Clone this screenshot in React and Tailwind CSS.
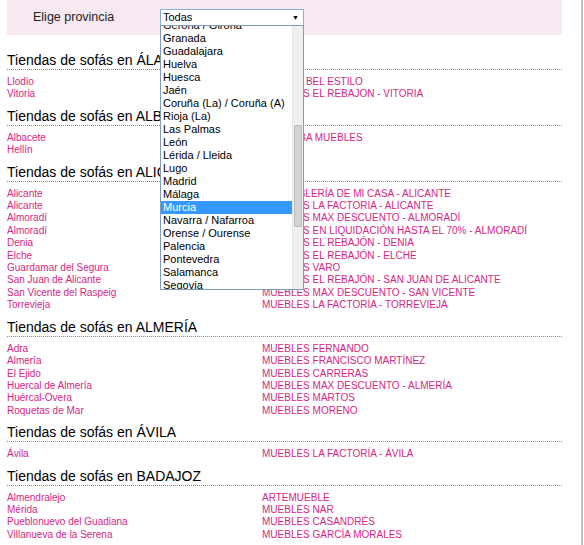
const provinces = [
  "Gerona / Girona",
  "Granada",
  "Guadalajara",
  "Huelva",
  "Huesca",
  "Jaén",
  "Coruña (La) / Coruña (A)",
  "Rioja (La)",
  "Las Palmas",
  "León",
  "Lérida / Lleida",
  "Lugo",
  "Madrid",
  "Málaga",
  "Murcia",
  "Navarra / Nafarroa",
  "Orense / Ourense",
  "Palencia",
  "Pontevedra",
  "Salamanca",
  "Segovia",
  "Sevilla",
];

const sections = [
  {
    name: "ÁLAVA",
    rows: [
      ["Llodio", "MUEBLE BEL ESTILO"],
      ["Vitoria", "MUEBLES EL REBAJON - VITORIA"],
    ],
  },
  {
    name: "ALBACETE",
    rows: [
      ["Albacete", "CÓRDOBA MUEBLES"],
      ["Hellín", "DECOR"],
    ],
  },
  {
    name: "ALICANTE",
    rows: [
      ["Alicante", "LA MUEBLERÍA DE MI CASA - ALICANTE"],
      ["Alicante", "MUEBLES LA FACTORIA - ALICANTE"],
      ["Almoradí", "MUEBLES MAX DESCUENTO - ALMORADÍ"],
      ["Almoradí", "MUEBLES EN LIQUIDACIÓN HASTA EL 70% - ALMORADÍ"],
      ["Denia", "MUEBLES EL REBAJÓN - DENIA"],
      ["Elche", "MUEBLES EL REBAJÓN - ELCHE"],
      ["Guardamar del Segura", "MUEBLES VARO"],
      ["San Juan de Alicante", "MUEBLES EL REBAJÓN - SAN JUAN DE ALICANTE"],
      ["San Vicente del Raspeig", "MUEBLES MAX DESCUENTO - SAN VICENTE"],
      ["Torrevieja", "MUEBLES LA FACTORÍA - TORREVIEJA"],
    ],
  },
  {
    name: "ALMERÍA",
    rows: [
      ["Adra", "MUEBLES FERNANDO"],
      ["Almería", "MUEBLES FRANCISCO MARTÍNEZ"],
      ["El Ejido", "MUEBLES CARRERAS"],
      ["Huercal de Almería", "MUEBLES MAX DESCUENTO - ALMERÍA"],
      ["Huércal-Overa", "MUEBLES MARTOS"],
      ["Roquetas de Mar", "MUEBLES MORENO"],
    ],
  },
  {
    name: "ÁVILA",
    rows: [["Ávila", "MUEBLES LA FACTORÍA - ÁVILA"]],
  },
  {
    name: "BADAJOZ",
    rows: [
      ["Almendralejo", "ARTEMUEBLE"],
      ["Mérida", "MUEBLES NAR"],
      ["Pueblonuevo del Guadiana", "MUEBLES CASANDRÉS"],
      ["Villanueva de la Serena", "MUEBLES GARCÍA MORALES"],
    ],
  },
];

function Section({ name, rows }) {
  return (
    <div className="mb-[6px]">
      <h2 className="text-[14px] leading-[18px] text-black border-b border-dotted border-[#8a8a8a]">
        Tiendas de sofás en {name}
      </h2>
      <div className="pt-[6px] grid grid-cols-[255px_1fr] text-[10px] leading-[12.4px] text-[#d42784]">
        {rows.map(([city, store], i) => (
          <div key={i} className="contents">
            <a href="#" className="whitespace-nowrap">{city}</a>
            <a href="#" className="whitespace-nowrap">{store}</a>
          </div>
        ))}
      </div>
    </div>
  );
}

export default function App() {
  return (
    <div
      className="w-[583px] h-[545px] overflow-hidden bg-white border-r-2 border-[#c4c4c4]"
      style={{ fontFamily: '"Liberation Sans", Arial, sans-serif' }}
    >
      <div className="relative ml-[7px] w-[555px]">
        {/* Province filter */}
        <div className="h-[35px] bg-[#f8e8f1] flex items-center pl-[26px]">
          <span className="w-[127px] text-[12.5px] text-[#222]">Elige provincia</span>
          <div className="w-[144px] h-[17px] bg-white border border-[#86b0e0] flex items-center justify-between pl-[2px] pr-[4px]">
            <span className="text-[11px] leading-none text-black">Todas</span>
            <span className="text-[7px] leading-none text-black">▼</span>
          </div>
        </div>

        {/* Open dropdown list */}
        <div className="absolute left-[153px] top-[25px] w-[144px] h-[265px] bg-white border border-[#7f9db9] flex z-10">
          <div className="flex-1 overflow-hidden">
            <div className="-mt-[7px]">
              {provinces.map((p) => (
                <div
                  key={p}
                  className={
                    p === "Murcia"
                      ? "h-[13px] leading-[13px] text-[11px] pl-[2px] whitespace-nowrap bg-[#3399ff] text-white"
                      : "h-[13px] leading-[13px] text-[11px] pl-[2px] whitespace-nowrap text-black"
                  }
                >
                  {p}
                </div>
              ))}
            </div>
          </div>
          <div className="w-[11px] bg-[#f0f0f0] border-l border-[#e4e4e4] pt-[99px] flex justify-center">
            <div className="w-[8px] h-[102px] bg-[#d3d3d3] border border-[#bcbcbc] rounded-[1px]" />
          </div>
        </div>

        {/* Store listing */}
        <div className="mt-4">
          {sections.map((s) => (
            <Section key={s.name} name={s.name} rows={s.rows} />
          ))}
        </div>
      </div>
    </div>
  );
}
